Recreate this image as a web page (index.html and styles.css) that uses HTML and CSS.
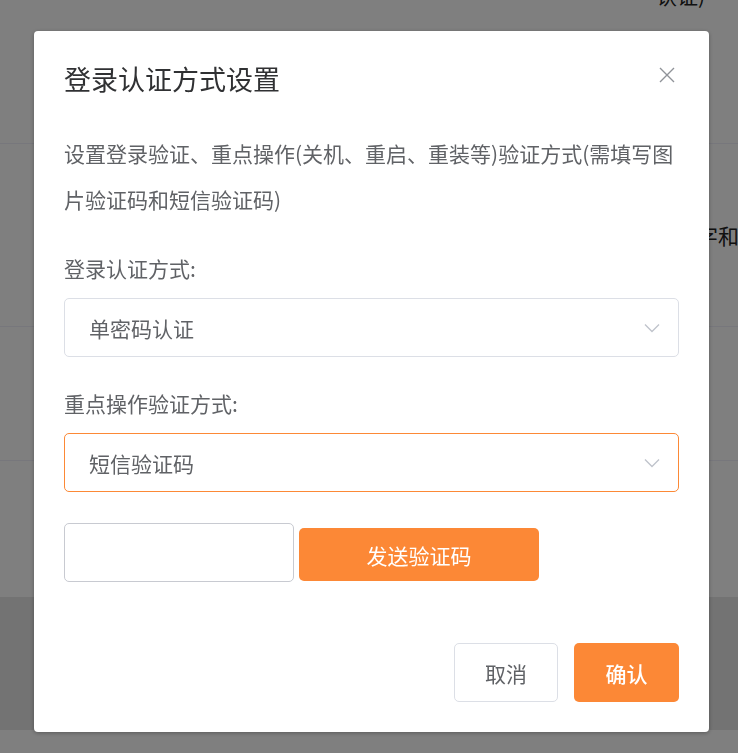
FILE: index.html
```html
<!DOCTYPE html>
<html lang="zh-CN">
<head>
<meta charset="utf-8">
<title>登录认证方式设置</title>
<link rel="stylesheet" href="styles.css">
</head>
<body>
<div class="page">
  <div class="row row-1"><span class="cell-text top-text">认证)</span></div>
  <div class="row row-2"><span class="cell-text mid-text">文字和密码</span></div>
  <div class="row row-3"></div>
  <div class="row row-4"></div>
  <div class="page-footer"></div>
</div>

<div class="overlay">
  <div class="dialog">
    <div class="dialog-header">
      <span class="dialog-title">登录认证方式设置</span>
      <button class="close-btn" aria-label="关闭">
        <svg width="16" height="16" viewBox="0 0 16 16"><path d="M1 1 L15 15 M15 1 L1 15" stroke="#909399" stroke-width="1.4" fill="none"/></svg>
      </button>
    </div>
    <p class="desc">设置登录验证、重点操作(关机、重启、重装等)验证方式(需填写图片验证码和短信验证码)</p>

    <div class="label">登录认证方式:</div>
    <div class="select">
      <span class="select-value">单密码认证</span>
      <svg class="chevron" width="16" height="10" viewBox="0 0 16 10"><path d="M1 1.5 L8 8.5 L15 1.5" stroke="#c0c4cc" stroke-width="1.4" fill="none"/></svg>
    </div>

    <div class="label">重点操作验证方式:</div>
    <div class="select select-active">
      <span class="select-value">短信验证码</span>
      <svg class="chevron" width="16" height="10" viewBox="0 0 16 10"><path d="M1 1.5 L8 8.5 L15 1.5" stroke="#c0c4cc" stroke-width="1.4" fill="none"/></svg>
    </div>

    <div class="code-row">
      <div class="code-input"></div>
      <button class="send-btn">发送验证码</button>
    </div>

    <div class="dialog-footer">
      <button class="btn btn-cancel">取消</button>
      <button class="btn btn-primary">确认</button>
    </div>
  </div>
</div>
</body>
</html>
```

FILE: styles.css
```css
* { box-sizing: border-box; }
html, body {
  margin: 0;
  padding: 0;
  width: 738px;
  height: 753px;
  overflow: hidden;
  font-family: "Noto Sans CJK SC", "Noto Sans", sans-serif;
  background: #ffffff;
}
.page {
  width: 738px;
  display: flex;
  flex-direction: column;
}
.row {
  border-bottom: 1px solid #eeeef8;
  white-space: nowrap;
  overflow: hidden;
  font-size: 21px;
  color: #222222;
}
.row-1 { height: 144px; }
.row-2 { height: 183px; display: flex; align-items: center; }
.row-3 { height: 134px; }
.row-4 { height: 136px; border-bottom: none; }
.page-footer { height: 133px; background: #e6e6e6; }
.cell-text { display: block; line-height: 24px; }
.top-text { margin-top: -17px; padding-left: 656px; }
.mid-text { padding-left: 676px; }

.overlay {
  position: fixed;
  left: 0;
  top: 0;
  width: 738px;
  height: 753px;
  background: rgba(0, 0, 0, 0.5);
  padding: 31px 0 0 34px;
}
.dialog {
  width: 675px;
  height: 701px;
  background: #ffffff;
  border-radius: 4px;
  box-shadow: 0 1px 4px rgba(0, 0, 0, 0.3);
  padding: 30px 30px 30px 30px;
}
.dialog-header {
  display: flex;
  justify-content: space-between;
  align-items: center;
  height: 36px;
}
.dialog-title {
  font-size: 27px;
  line-height: 36px;
  color: #303133;
}
.close-btn {
  border: none;
  background: none;
  padding: 0;
  width: 16px;
  height: 16px;
  margin-right: 4px;
  margin-top: -8px;
  display: flex;
}
.desc {
  margin: 33px 0 0 0;
  font-size: 21px;
  line-height: 46px;
  color: #606266;
}
.label {
  margin-top: 31px;
  font-size: 21px;
  line-height: 30px;
  color: #606266;
}
.select {
  margin-top: 15px;
  height: 59px;
  border: 1px solid #dcdfe6;
  border-radius: 5px;
  display: flex;
  align-items: center;
  justify-content: space-between;
  padding: 0 18px 0 24px;
}
.select-active { border-color: #fc8936; }
.select-value {
  font-size: 21px;
  color: #606266;
}
.chevron { display: block; }
.code-row {
  margin-top: 31px;
  display: flex;
  align-items: flex-start;
  gap: 5px;
  height: 59px;
}
.code-input {
  width: 230px;
  height: 59px;
  border: 1px solid #c8cad1;
  border-radius: 5px;
}
.send-btn {
  margin-top: 5px;
  width: 240px;
  height: 53px;
  border: none;
  border-radius: 5px;
  background: #fc8836;
  color: #ffffff;
  font-family: inherit;
  font-size: 21px;
  padding: 0;
}
.dialog-footer {
  margin-top: 61px;
  display: flex;
  justify-content: flex-end;
  gap: 16px;
}
.btn {
  height: 59px;
  border-radius: 5px;
  font-family: inherit;
  font-size: 21px;
  padding: 0;
}
.btn-cancel {
  width: 104px;
  background: #ffffff;
  border: 1px solid #dcdfe6;
  color: #606266;
}
.btn-primary {
  width: 105px;
  background: #fc8836;
  border: none;
  color: #ffffff;
  font-weight: 500;
}
```
